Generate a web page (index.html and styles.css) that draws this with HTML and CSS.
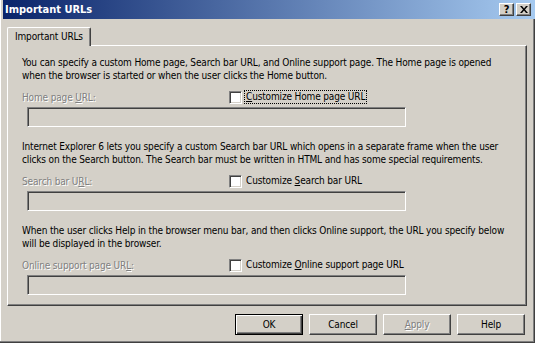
FILE: index.html
```html
<!DOCTYPE html>
<html lang="en">
<head>
<meta charset="UTF-8" />
<meta name="viewport" content="width=device-width, initial-scale=1.0" />
<title>Important URLs</title>
<link rel="stylesheet" href="styles.css">
</head>
<body>
<div class="window">
    <div class="titlebar">
        <span class="title">Important URLs</span>
        <div class="caption-buttons">
            <span class="cap-btn">?</span>
            <span class="cap-btn cap-close">
                <svg width="8" height="7" viewBox="0 0 8 7"><path d="M0 0h2l2 2.5L6 0h2L5 3.5 8 7H6L4 4.5 2 7H0l3-3.5z" fill="#000"/></svg>
            </span>
        </div>
    </div>
    <div class="content">
        <div class="tabs">
            <div class="tab">Important URLs</div>
        </div>
        <div class="panel">
            <div class="section">
                <p class="desc">You can specify a custom Home page, Search bar URL, and Online support page. The Home page is opened when the browser is started or when the user clicks the Home button.</p>
                <div class="row">
                    <span class="label disabled">Home page <u>U</u>RL:</span>
                    <label class="check focused"><span class="box"></span><span class="check-text"><u>C</u>ustomize Home page URL</span></label>
                </div>
                <div class="field"></div>
            </div>
            <div class="section">
                <p class="desc">Internet Explorer 6 lets you specify a custom Search bar URL which opens in a separate frame when the user clicks on the Search button. The Search bar must be written in HTML and has some special requirements.</p>
                <div class="row">
                    <span class="label disabled">Search bar U<u>R</u>L:</span>
                    <label class="check"><span class="box"></span><span class="check-text">Customize <u>S</u>earch bar URL</span></label>
                </div>
                <div class="field"></div>
            </div>
            <div class="section">
                <p class="desc">When the user clicks Help in the browser menu bar, and then clicks Online support, the URL you specify below will be displayed in the browser.</p>
                <div class="row">
                    <span class="label disabled">Online support page UR<u>L</u>:</span>
                    <label class="check"><span class="box"></span><span class="check-text">Customize <u>O</u>nline support page URL</span></label>
                </div>
                <div class="field"></div>
            </div>
        </div>
        <div class="buttons">
            <button class="btn default">OK</button>
            <button class="btn">Cancel</button>
            <button class="btn" disabled><u>A</u>pply</button>
            <button class="btn">Help</button>
        </div>
    </div>
</div>
</body>
</html>
```

FILE: styles.css
```css
* { box-sizing: border-box; }
body { margin: 0; background: #d4d0c8; font-family: "DejaVu Sans Condensed", "DejaVu Sans", sans-serif; font-size: 10px; letter-spacing: -0.15px; color: #000; }
u { text-decoration: underline; text-underline-offset: 1px; }

.window { width: 535px; height: 343px; background: #d4d0c8; padding: 0 3px 3px 3px; border-right: 1px solid #404040; border-bottom: 1px solid #404040; box-shadow: inset -1px -1px 0 #808080, inset 1px 0 0 #fff; display: flex; flex-direction: column; }

.titlebar { height: 19px; margin-right: -4px; background: linear-gradient(to right, #0a246a, #a6caf0); display: flex; align-items: center; justify-content: space-between; padding: 0 4px 0 2px; }
.title { color: #fff; font-weight: bold; font-size: 11px; letter-spacing: 0; }
.caption-buttons { display: flex; gap: 2px; }
.cap-btn { width: 15px; height: 13px; background: #d4d0c8; border-top: 1px solid #fff; border-left: 1px solid #fff; border-right: 1px solid #404040; border-bottom: 1px solid #404040; box-shadow: inset -1px -1px 0 #808080; display: flex; align-items: center; justify-content: center; font-weight: bold; font-size: 11px; line-height: 1; }

.content { flex: 1; display: flex; flex-direction: column; padding: 8px 4px 0 4px; }
.tabs { display: flex; height: 18px; }
.tab { width: 84px; height: 19px; padding: 3px 0 0 7px; white-space: nowrap; border-top: 1px solid #fff; border-left: 1px solid #fff; border-right: 1px solid #404040; box-shadow: inset -1px 0 0 #808080; border-radius: 2px 2px 0 0; background: #d4d0c8; position: relative; z-index: 1; }

.panel { height: 261px; border-top: 1px solid #fff; border-left: 1px solid #fff; border-right: 1px solid #404040; border-bottom: 1px solid #404040; box-shadow: inset -1px -1px 0 #808080; padding: 10px 14px 0 14px; }
.section { height: 84px; }
.desc { margin: 0; line-height: 13px; }
.row { display: grid; grid-template-columns: 207px auto; align-items: center; margin-top: 8px; height: 14px; }
.disabled { color: #808080; text-shadow: 1px 1px 0 #fff; }
.check { display: flex; align-items: center; gap: 3px; }
.box { width: 13px; height: 13px; background: #fff; border-top: 1px solid #808080; border-left: 1px solid #808080; border-right: 1px solid #fff; border-bottom: 1px solid #fff; box-shadow: inset 1px 1px 0 #404040, inset -1px -1px 0 #d4d0c8; }
.check-text { padding: 0 1px; line-height: 12px; }
.focused .check-text { outline: 1px dotted #000; }
.field { width: 379px; height: 20px; margin: 3px 0 0 5px; border-top: 1px solid #808080; border-left: 1px solid #808080; border-right: 1px solid #fff; border-bottom: 1px solid #fff; box-shadow: inset 1px 1px 0 #404040, inset -1px -1px 0 #d4d0c8; background: #d4d0c8; }

.buttons { display: flex; justify-content: flex-end; gap: 6px; padding: 8px 2px 0 0; }
.btn { width: 68px; height: 21px; font-family: inherit; font-size: 10px; letter-spacing: inherit; background: #d4d0c8; color: #000; border-top: 1px solid #fff; border-left: 1px solid #fff; border-right: 1px solid #404040; border-bottom: 1px solid #404040; box-shadow: inset -1px -1px 0 #808080; padding: 0; }
.btn.default { border: 1px solid #000; box-shadow: inset 1px 1px 0 #fff, inset -1px -1px 0 #404040, inset -2px -2px 0 #808080; }
.btn:disabled { color: #808080; text-shadow: 1px 1px 0 #fff; }
```
